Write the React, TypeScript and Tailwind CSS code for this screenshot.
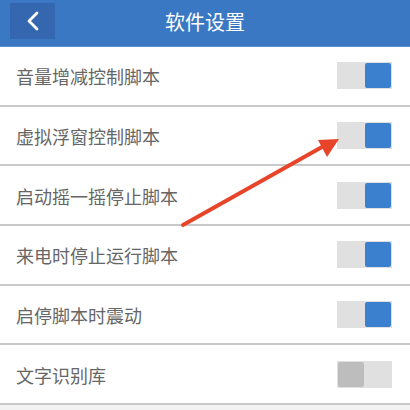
import React from 'react';

const rows = [
  { label: '音量增减控制脚本', on: true },
  { label: '虚拟浮窗控制脚本', on: true },
  { label: '启动摇一摇停止脚本', on: true },
  { label: '来电时停止运行脚本', on: true },
  { label: '启停脚本时震动', on: true },
  { label: '文字识别库', on: false },
];

const Toggle: React.FC<{ on: boolean }> = ({ on }) => (
  <div className={`flex h-[27px] w-[55px] bg-[#e0e0e0] p-[1px] ${on ? 'justify-end' : 'justify-start'}`}>
    <div className={`h-full w-[26px] rounded-[2px] ${on ? 'bg-[#3a80cf]' : 'bg-[#bdbdbd]'}`}></div>
  </div>
);

const App: React.FC = () => {
  return (
    <div className="relative w-[410px] h-[410px] overflow-hidden bg-[#f2f2f2] font-['Noto_Sans_CJK_SC','Noto_Sans',sans-serif]">
      {/* Header */}
      <header className="flex items-center h-[47px] bg-[#3b78c4] border-b border-[#5a8fd0] relative">
        <button className="ml-[10px] mt-[-5px] flex h-[36px] w-[45px] items-center justify-center bg-[#3467b0]">
          <svg width="14" height="20" viewBox="0 0 14 20" fill="none">
            <path d="M11 2 L3 10 L11 18" stroke="white" strokeWidth="2.8" strokeLinecap="round" strokeLinejoin="round" />
          </svg>
        </button>
        <h1 className="absolute left-0 right-0 top-[7px] text-center text-[20px] leading-[30px] text-white">软件设置</h1>
      </header>

      {/* Settings list */}
      <ul className="bg-white">
        {rows.map((r) => (
          <li key={r.label} className="flex h-[59.7px] items-center justify-between border-b-2 border-[#c9c9c9] pl-[16px] pr-[18px]">
            <span className="text-[18px] text-[#666666] pt-[2px]">{r.label}</span>
            <Toggle on={r.on} />
          </li>
        ))}
      </ul>

      {/* Annotation arrow */}
      <svg className="absolute left-0 top-0 pointer-events-none" width="410" height="410" viewBox="0 0 410 410">
        <line x1="183" y1="225" x2="322" y2="147" stroke="#e8442a" strokeWidth="4" strokeLinecap="round" />
        <polygon points="339,139 318,140 327,157" fill="#e8442a" />
      </svg>
    </div>
  );
};

export default App;
